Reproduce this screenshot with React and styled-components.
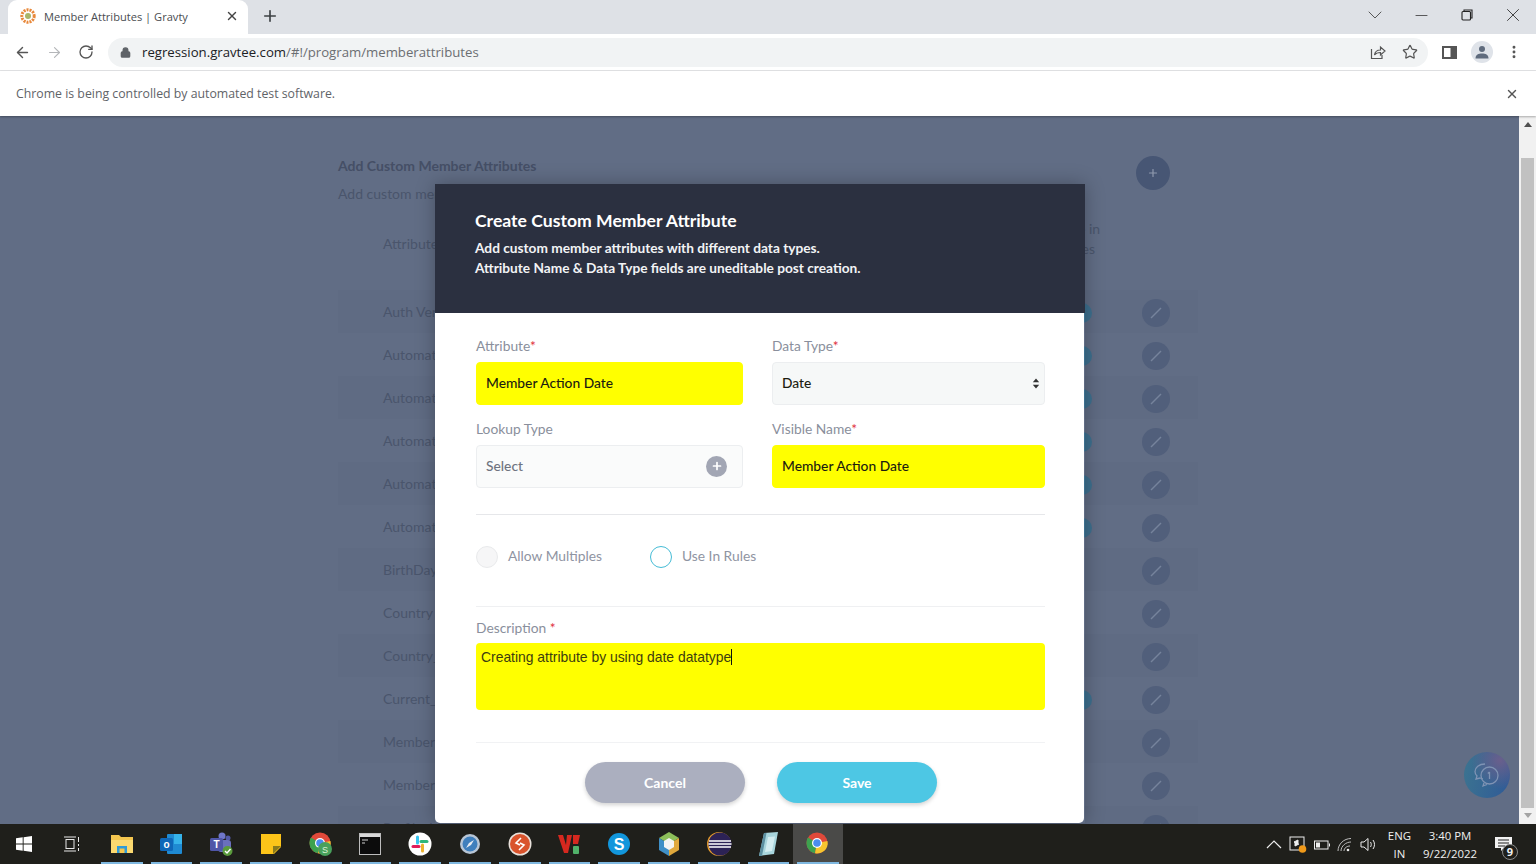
import React from 'react';
import styled, { createGlobalStyle } from 'styled-components';
import { ArrowLeft, ArrowRight, RotateCw, Lock, Star, Plus, X, ChevronDown, Minus, MoreVertical } from 'lucide-react';

const rows = [
  { name: 'Auth Verified', toggle: true },
  { name: 'Automation_1', toggle: true },
  { name: 'Automation_2', toggle: true },
  { name: 'Automation_3', toggle: true },
  { name: 'Automation_4', toggle: true },
  { name: 'Automation_5', toggle: true },
  { name: 'BirthDay', toggle: false },
  { name: 'Country', toggle: false },
  { name: 'Country_Code', toggle: false },
  { name: 'Current_Tier', toggle: true },
  { name: 'Member_Since', toggle: false },
  { name: 'Member_Type', toggle: false },
  { name: 'Profile_Id', toggle: false },
];

const App = () => {
  return (
    <>
      <GlobalStyle />
      <StWindow>
        <StTabStrip>
          <StTab>
            <GravtyLogo />
            <StTabTitle>Member Attributes | Gravty</StTabTitle>
            <X size={14} strokeWidth={2.4} color="#444" />
          </StTab>
          <StNewTab>
            <Plus size={18} strokeWidth={2.2} color="#3c4043" />
          </StNewTab>
          <StWindowControls>
            <StWinButton>
              <ChevronDown size={24} strokeWidth={0.8} color="#333" />
            </StWinButton>
            <StWinButton>
              <Minus size={19} strokeWidth={0.9} color="#222" />
            </StWinButton>
            <StWinButton>
              <RestoreIcon />
            </StWinButton>
            <StWinButton>
              <X size={22} strokeWidth={0.9} color="#222" />
            </StWinButton>
          </StWindowControls>
        </StTabStrip>

        <StToolbar>
          <StNavButtons>
            <ArrowLeft size={17} strokeWidth={2} color="#555" />
            <ArrowRight size={17} strokeWidth={1.6} color="#b4b6b9" />
            <RotateCw size={16} strokeWidth={2} color="#555" />
          </StNavButtons>
          <StOmnibox>
            <Lock size={11} strokeWidth={3} color="#5f6368" fill="#5f6368" />
            <StUrl>
              regression.gravtee.com<StUrlPath>/#!/program/memberattributes</StUrlPath>
            </StUrl>
            <StOmniIcons>
              <ShareIcon />
              <Star size={16} strokeWidth={1.8} color="#555" />
            </StOmniIcons>
          </StOmnibox>
          <StToolbarEnd>
            <PanelIcon />
            <StAvatar>
              <AvatarIcon />
            </StAvatar>
            <MoreVertical size={16} strokeWidth={2.4} color="#555" />
          </StToolbarEnd>
        </StToolbar>

        <StInfoBar>
          <span>Chrome is being controlled by automated test software.</span>
          <X size={14} strokeWidth={2.4} color="#555" />
        </StInfoBar>

        <StViewport>
          <StPage>
            <StBackdropContent>
              <StSectionHead>
                <div>
                  <StSectionTitle>Add Custom Member Attributes</StSectionTitle>
                  <StSectionSub>Add custom member attributes</StSectionSub>
                </div>
                <StAddButton>
                  <Plus size={12} strokeWidth={2.4} color="#8f99ae" />
                </StAddButton>
              </StSectionHead>
              <StTableHead>
                <span>Attribute</span>
                <StHeadRight>
                  Use in
                  <br />
                  Rules
                </StHeadRight>
              </StTableHead>
              <StRows>
                {rows.map((row, i) => (
                  <StRow key={row.name} $striped={i % 2 === 0}>
                    <span>{row.name}</span>
                    <StRowEnd>
                      <StToggle $on={row.toggle} />
                      <StEditButton>
                        <svg width="14" height="14" viewBox="0 0 14 14">
                          <path d="M2 12 L12 2" stroke="#76839c" strokeWidth="1.5" />
                        </svg>
                      </StEditButton>
                    </StRowEnd>
                  </StRow>
                ))}
              </StRows>
            </StBackdropContent>

            <StChatBubble>
              <ChatIcon />
            </StChatBubble>

            <StModal>
              <StModalHeader>
                <StModalTitle>Create Custom Member Attribute</StModalTitle>
                <StModalText>Add custom member attributes with different data types.</StModalText>
                <StModalText>Attribute Name &amp; Data Type fields are uneditable post creation.</StModalText>
              </StModalHeader>
              <StModalBody>
                <StFieldGrid>
                  <StField>
                    <StLabel>
                      Attribute<StRequired>*</StRequired>
                    </StLabel>
                    <StInput $filled>Member Action Date</StInput>
                  </StField>
                  <StField>
                    <StLabel>
                      Data Type<StRequired>*</StRequired>
                    </StLabel>
                    <StInput>
                      Date
                      <StSelectCaret>
                        <svg width="8" height="11" viewBox="0 0 8 11">
                          <path d="M4 0.5 L7.2 4.2 H0.8 Z M4 10.5 L7.2 6.8 H0.8 Z" fill="#333" />
                        </svg>
                      </StSelectCaret>
                    </StInput>
                  </StField>
                  <StField>
                    <StLabel>Lookup Type</StLabel>
                    <StInput $muted>
                      Select
                      <StRoundPlus>
                        <Plus size={12} strokeWidth={3.4} color="#fff" />
                      </StRoundPlus>
                    </StInput>
                  </StField>
                  <StField>
                    <StLabel>
                      Visible Name<StRequired>*</StRequired>
                    </StLabel>
                    <StInput $filled>Member Action Date</StInput>
                  </StField>
                </StFieldGrid>

                <StChecks>
                  <StCheck>
                    <StRadio $disabled />
                    <StCheckLabel>Allow Multiples</StCheckLabel>
                  </StCheck>
                  <StCheck>
                    <StRadio />
                    <StCheckLabel>Use In Rules</StCheckLabel>
                  </StCheck>
                </StChecks>

                <StDescription>
                  <StDescriptionLabel>
                    Description <StRequired>*</StRequired>
                  </StDescriptionLabel>
                  <StTextArea>
                    Creating attribute by using date datatype
                    <StCaret />
                  </StTextArea>
                </StDescription>

                <StActions>
                  <StActionButton $tone="#abafbf">Cancel</StActionButton>
                  <StActionButton $tone="#4dc7e4">Save</StActionButton>
                </StActions>
              </StModalBody>
            </StModal>
          </StPage>

          <StScrollbar>
            <StScrollArrow />
            <StScrollThumb />
            <StScrollArrow $down />
          </StScrollbar>
        </StViewport>

        <StTaskbar>
          <StStartButton>
            <WindowsIcon />
          </StStartButton>
          <StTaskSlot>
            <TaskViewIcon />
          </StTaskSlot>
          <StTaskSlot $running>
            <FolderIcon />
          </StTaskSlot>
          <StTaskSlot $running>
            <OutlookIcon />
          </StTaskSlot>
          <StTaskSlot $running>
            <TeamsIcon />
          </StTaskSlot>
          <StTaskSlot $running>
            <NotesIcon />
          </StTaskSlot>
          <StTaskSlot $running>
            <ChromeIcon badge />
          </StTaskSlot>
          <StTaskSlot $running>
            <ConsoleIcon />
          </StTaskSlot>
          <StTaskSlot $running>
            <SlackIcon />
          </StTaskSlot>
          <StTaskSlot $running>
            <SafariIcon />
          </StTaskSlot>
          <StTaskSlot $running>
            <RemoteIcon />
          </StTaskSlot>
          <StTaskSlot $running>
            <VmIcon />
          </StTaskSlot>
          <StTaskSlot $running>
            <SkypeIcon />
          </StTaskSlot>
          <StTaskSlot $running>
            <CubeIcon />
          </StTaskSlot>
          <StTaskSlot $running>
            <EclipseIcon />
          </StTaskSlot>
          <StTaskSlot $running>
            <BookIcon />
          </StTaskSlot>
          <StTaskSlot $running $active>
            <ChromeIcon />
          </StTaskSlot>

          <StTray>
            <TrayIcons />
            <StTrayLang>
              <span>ENG</span>
              <span>IN</span>
            </StTrayLang>
            <StTrayClock>
              <span>3:40 PM</span>
              <span>9/22/2022</span>
            </StTrayClock>
            <NotificationIcon />
          </StTray>
        </StTaskbar>
      </StWindow>
    </>
  );
};

export default App;

const GravtyLogo = () => (
  <svg width="16" height="16" viewBox="0 0 16 16">
    <circle cx="8" cy="8" r="6.2" fill="none" stroke="#e8883a" strokeWidth="3" strokeDasharray="2 1" />
    <circle cx="8" cy="8" r="3" fill="#a9b56a" />
  </svg>
);

const RestoreIcon = () => (
  <svg width="12" height="12" viewBox="0 0 12 12" fill="none" stroke="#222" strokeWidth="1.1">
    <rect x="1" y="2.5" width="8.5" height="8.5" rx="1" />
    <path d="M3 2.5 V1 H11 V9 H9.5" />
  </svg>
);

const ShareIcon = () => (
  <svg width="16" height="16" viewBox="0 0 16 16" fill="none" stroke="#555" strokeWidth="1.2">
    <path d="M1.5 5 V14.5 H12 V11" />
    <path d="M4.5 11 C5 7.5 8 6 10.5 6 V3 L15 7 L10.5 11 V8.5 C8 8.5 6 9 4.5 11 Z" />
  </svg>
);

const PanelIcon = () => (
  <svg width="15" height="13" viewBox="0 0 15 13">
    <rect x="0" y="0" width="15" height="13" fill="#555" />
    <rect x="2" y="2" width="6.5" height="9" fill="#fff" />
  </svg>
);

const AvatarIcon = () => (
  <svg width="14" height="14" viewBox="0 0 14 14" fill="#5f6b7d">
    <circle cx="7" cy="4" r="3" />
    <path d="M0.5 13.5 C0.5 9.5 3.5 8.5 7 8.5 C10.5 8.5 13.5 9.5 13.5 13.5 Z" />
  </svg>
);

const ChatIcon = () => (
  <svg width="30" height="26" viewBox="0 0 30 26" fill="none" stroke="#7f93b4" strokeWidth="1.3">
    <path d="M13 2 C7 2 3 5.5 3 9.5 C3 11.5 4 13 5 14 L4 17 L8 16 C9 16.5 10 16.7 11 16.8" />
    <circle cx="17.5" cy="13.5" r="8.5" />
    <path d="M17.5 10 V17 M15.8 11.5 L17.5 10" />
    <path d="M12 21 L11 24 L15 22.5" />
  </svg>
);

const WindowsIcon = () => (
  <svg width="16" height="16" viewBox="0 0 16 16" fill="#fff">
    <path d="M0 2.3 L6.7 1.3 V7.6 H0 Z M7.6 1.2 L16 0 V7.6 H7.6 Z M0 8.4 H6.7 V14.7 L0 13.7 Z M7.6 8.4 H16 V16 L7.6 14.8 Z" />
  </svg>
);

const TaskViewIcon = () => (
  <svg width="17" height="16" viewBox="0 0 17 16" fill="none" stroke="#e8e8e8" strokeWidth="1">
    <rect x="3" y="3.5" width="8" height="9" />
    <path d="M1 1 H13 M1 15 H13 M15.5 1 V6 M15.5 8 V10 M15.5 12 V15" />
  </svg>
);

const FolderIcon = () => (
  <svg width="24" height="22" viewBox="0 0 24 22">
    <path d="M1 2 H9 L11 4 H23 V20 H1 Z" fill="#f4c64f" />
    <rect x="1" y="7" width="22" height="13" fill="#fbd970" />
    <rect x="7" y="13" width="10" height="7" fill="#2f9bd8" />
    <rect x="9.5" y="15.5" width="5" height="4.5" fill="#f4c64f" />
  </svg>
);

const OutlookIcon = () => (
  <svg width="24" height="24" viewBox="0 0 24 24">
    <rect x="8" y="2" width="15" height="20" rx="1" fill="#1f8ad2" />
    <rect x="15" y="2" width="8" height="10" fill="#36b3ea" />
    <rect x="1" y="6" width="13" height="13" rx="1.5" fill="#0f67b8" />
    <text x="7.5" y="16" textAnchor="middle" fontSize="10" fontFamily="Liberation Sans, sans-serif" fontWeight="700" fill="#fff">
      o
    </text>
  </svg>
);

const TeamsIcon = () => (
  <svg width="26" height="26" viewBox="0 0 26 26">
    <circle cx="14" cy="5" r="3.5" fill="#6f76c9" />
    <circle cx="20" cy="7" r="2.5" fill="#525aa8" />
    <rect x="10" y="9" width="13" height="12" rx="3" fill="#6a70bd" />
    <rect x="2" y="7" width="13" height="13" rx="1.5" fill="#4f56a8" />
    <text x="8.5" y="17" textAnchor="middle" fontSize="10" fontFamily="Liberation Sans, sans-serif" fontWeight="700" fill="#fff">
      T
    </text>
    <circle cx="19.5" cy="20" r="5" fill="#5a9b3c" />
    <path d="M17 20 L19 22 L22.5 18" fill="none" stroke="#fff" strokeWidth="1.4" />
  </svg>
);

const NotesIcon = () => (
  <svg width="22" height="22" viewBox="0 0 22 22">
    <path d="M1 1 H21 V14 L14 21 H1 Z" fill="#fcc419" />
    <path d="M21 13 L13 21 V13 Z" fill="#8a7a1c" />
  </svg>
);

const ChromeIcon = ({ badge }) => (
  <svg width="26" height="26" viewBox="0 0 26 26">
    <circle cx="12" cy="12" r="10.5" fill="#e0493a" />
    <path d="M12 12 L3 6.5 A10.5 10.5 0 0 0 10 22.3 Z" fill="#3da24f" />
    <path d="M12 12 L22.5 10 A10.5 10.5 0 0 1 10 22.3 Z" fill="#f6c52f" />
    <circle cx="12" cy="12" r="5" fill="#fff" />
    <circle cx="12" cy="12" r="3.8" fill="#4b8df0" />
    {badge && (
      <>
        <circle cx="17" cy="18" r="7" fill="#48a05c" />
        <text x="17" y="21.5" textAnchor="middle" fontSize="9" fontFamily="Liberation Sans, sans-serif" fill="#dff3d9">
          S
        </text>
      </>
    )}
  </svg>
);

const ConsoleIcon = () => (
  <svg width="22" height="22" viewBox="0 0 22 22">
    <rect x="0.5" y="0.5" width="21" height="21" fill="#0c0c0c" stroke="#bdbdbd" />
    <rect x="1" y="1" width="20" height="3" fill="#d9d9d9" />
    <path d="M3 7 H9 M3 10 H6" stroke="#ccc" strokeWidth="1" />
  </svg>
);

const SlackIcon = () => (
  <svg width="24" height="24" viewBox="0 0 24 24">
    <circle cx="12" cy="12" r="11.5" fill="#fff" />
    <g strokeWidth="3" strokeLinecap="round">
      <path d="M9.5 5 V11" stroke="#36c5f0" />
      <path d="M5 14.5 H11" stroke="#e01e5a" />
      <path d="M14.5 19 V13" stroke="#ecb22e" />
      <path d="M19 9.5 H13" stroke="#2eb67d" />
    </g>
  </svg>
);

const SafariIcon = () => (
  <svg width="22" height="22" viewBox="0 0 22 22">
    <circle cx="11" cy="11" r="10" fill="#b8c6d6" />
    <circle cx="11" cy="11" r="7.5" fill="#3f7fbd" />
    <path d="M15 7 L12 12 L7 15 L10 10 Z" fill="#e8ecf2" />
  </svg>
);

const RemoteIcon = () => (
  <svg width="24" height="24" viewBox="0 0 24 24">
    <circle cx="12" cy="12" r="11.5" fill="#e8e1db" />
    <circle cx="12" cy="12" r="10" fill="#d9532c" />
    <path d="M13 6 L8 11 L12 13 M11 18 L16 13 L12 11" fill="none" stroke="#fff" strokeWidth="1.6" />
  </svg>
);

const VmIcon = () => (
  <svg width="24" height="24" viewBox="0 0 24 24">
    <path d="M1 3 H6 L9 13 L10 3 H15 L11 21 H7 Z" fill="#d5281f" />
    <path d="M16 3 H23 L21 12 H16 Z" fill="#d5281f" />
    <rect x="16" y="14" width="6" height="8" rx="1" fill="#51b26a" />
  </svg>
);

const SkypeIcon = () => (
  <svg width="24" height="24" viewBox="0 0 24 24">
    <circle cx="12" cy="12" r="11" fill="#1296dc" />
    <text x="12" y="17.5" textAnchor="middle" fontSize="16" fontFamily="Liberation Sans, sans-serif" fontWeight="700" fill="#fff">
      S
    </text>
  </svg>
);

const CubeIcon = () => (
  <svg width="22" height="26" viewBox="0 0 22 26">
    <path d="M11 1 L21 7 L11 13 L1 7 Z" fill="#8dbf5a" />
    <path d="M1 7 L11 13 V25 L1 19 Z" fill="#3f8fc7" />
    <path d="M21 7 L11 13 V25 L21 19 Z" fill="#e0a83c" />
    <path d="M11 7 L16 10 V16 L11 19 L6 16 V10 Z" fill="#f4f4f4" />
  </svg>
);

const EclipseIcon = () => (
  <svg width="26" height="26" viewBox="0 0 26 26">
    <circle cx="13" cy="13" r="12" fill="#e39a2e" />
    <circle cx="14" cy="13" r="11.5" fill="#2c2255" />
    <path d="M3 10 H25 M2.5 13 H25.5 M3 16 H25" stroke="#fff" strokeWidth="1.5" />
  </svg>
);

const BookIcon = () => (
  <svg width="22" height="26" viewBox="0 0 22 26">
    <path d="M7 2 L21 1 L17 23 L2 25 Z" fill="#a8d5dc" />
    <path d="M7 2 L2 25 L5 25 L9.5 2 Z" fill="#5c8fa0" />
    <path d="M11 6 L18 5.5 L15 20 L8 21 Z" fill="#d4edf0" />
  </svg>
);

const TrayIcons = () => (
  <StTrayIcons>
    <svg width="16" height="9" viewBox="0 0 16 9" fill="none" stroke="#eee" strokeWidth="1.2">
      <path d="M1 8 L8 1 L15 8" />
    </svg>
    <svg width="18" height="18" viewBox="0 0 18 18" fill="none" stroke="#eee" strokeWidth="1">
      <rect x="1" y="1" width="14" height="13" />
      <path d="M5 6 L9 4 V8 Z M10 8 L6 10 V6" fill="#eee" />
      <circle cx="13.5" cy="13" r="3.8" fill="#f09a1a" stroke="none" />
    </svg>
    <svg width="16" height="10" viewBox="0 0 16 10" fill="none" stroke="#eee" strokeWidth="1">
      <rect x="0.5" y="1" width="13.5" height="8" />
      <rect x="2" y="2.5" width="4" height="5" fill="#eee" stroke="none" />
      <path d="M15.5 3.5 V6.5" />
    </svg>
    <svg width="16" height="15" viewBox="0 0 16 15" fill="none" stroke="#bdbdbd" strokeWidth="1">
      <path d="M1 14 C1 7 7 1.5 14 1.5 M4 14 C4 9 9 5 14 5 M7 14 C7 11 10 9 13 9" />
      <circle cx="11" cy="13" r="1.3" fill="#eee" stroke="none" />
    </svg>
    <svg width="17" height="15" viewBox="0 0 17 15" fill="none" stroke="#eee" strokeWidth="1">
      <path d="M1 5 H4 L8 1.5 V13.5 L4 10 H1 Z" />
      <path d="M10.5 5 C11.5 6.5 11.5 8.5 10.5 10 M13 3 C15 5.5 15 9.5 13 12" />
    </svg>
  </StTrayIcons>
);

const NotificationIcon = () => (
  <StNotification>
    <svg width="17" height="14" viewBox="0 0 17 14">
      <path d="M0 0 H17 V11 H9 L6 14 V11 H0 Z" fill="#f2f2f2" />
      <path d="M3 3 H14 M3 6 H14 M3 9 H10" stroke="#202020" strokeWidth="1" />
    </svg>
    <StNotificationCount>9</StNotificationCount>
  </StNotification>
);

const GlobalStyle = createGlobalStyle`
  html, body {
    margin: 0;
    padding: 0;
    height: 100%;
    overflow: hidden;
    background: #616d85;
  }
  #root {
    height: 100%;
  }
  * {
    box-sizing: border-box;
  }
`;

const StWindow = styled.div`
  width: 1536px;
  height: 864px;
  display: flex;
  flex-direction: column;
  font-family: 'Open Sans', 'Liberation Sans', sans-serif;
`;

const StTabStrip = styled.div`
  height: 34px;
  display: flex;
  align-items: flex-end;
  padding-left: 8px;
  background: #dee1e6;
`;

const StTab = styled.div`
  width: 240px;
  height: 34px;
  padding: 0 9px 2px 12px;
  display: flex;
  align-items: center;
  background: #fff;
  border-radius: 9px 9px 0 0;
`;

const StTabTitle = styled.span`
  flex: 1;
  margin-left: 8px;
  font-size: 11.1px;
  color: #4a4d51;
  white-space: nowrap;
`;

const StNewTab = styled.div`
  width: 30px;
  height: 34px;
  margin-left: 7px;
  padding-bottom: 2px;
  display: flex;
  align-items: center;
  justify-content: center;
`;

const StWindowControls = styled.div`
  margin-left: auto;
  height: 34px;
  padding-bottom: 4px;
  display: flex;
  align-items: center;
`;

const StWinButton = styled.div`
  width: 46px;
  display: flex;
  justify-content: center;
`;

const StToolbar = styled.div`
  height: 37px;
  display: flex;
  align-items: center;
  background: #fff;
  border-bottom: 1px solid #e3e4e6;
`;

const StNavButtons = styled.div`
  width: 108px;
  padding: 0 14px 0 14px;
  display: flex;
  align-items: center;
  justify-content: space-between;
`;

const StOmnibox = styled.div`
  width: 1320px;
  height: 29px;
  padding: 0 10px 0 12px;
  display: flex;
  align-items: center;
  background: #f1f3f4;
  border-radius: 15px;
`;

const StUrl = styled.span`
  flex: 1;
  margin-left: 11px;
  font-size: 13.2px;
  color: #202124;
`;

const StUrlPath = styled.span`
  color: #6b6e72;
`;

const StOmniIcons = styled.div`
  width: 48px;
  display: flex;
  align-items: center;
  justify-content: space-between;
`;

const StToolbarEnd = styled.div`
  flex: 1;
  padding: 0 14px 0 14px;
  display: flex;
  align-items: center;
  justify-content: space-between;
`;

const StAvatar = styled.div`
  width: 22px;
  height: 22px;
  display: flex;
  align-items: center;
  justify-content: center;
  background: #dfe3e9;
  border-radius: 50%;
`;

const StInfoBar = styled.div`
  height: 45px;
  padding: 0 17px 0 16px;
  display: flex;
  align-items: center;
  justify-content: space-between;
  font-size: 12.3px;
  color: #5f6368;
  background: #fff;
  box-shadow: 0 1px 2px rgba(0, 0, 0, 0.3);
  position: relative;
  z-index: 1;
`;

const StViewport = styled.div`
  flex: 1;
  min-height: 0;
  display: flex;
`;

const StPage = styled.div`
  flex: 1;
  position: relative;
  overflow: hidden;
  background: #616d85;
`;

const StBackdropContent = styled.div`
  width: 860px;
  margin-left: 338px;
  padding-top: 41px;
  font-family: Lato, 'Open Sans', sans-serif;
  font-size: 14px;
  color: #4a556c;
`;

const StSectionHead = styled.div`
  display: flex;
  justify-content: space-between;
  padding-right: 28px;
`;

const StSectionTitle = styled.div`
  font-size: 14px;
  font-weight: 700;
  line-height: 18px;
  color: #454f66;
`;

const StSectionSub = styled.div`
  margin-top: 10px;
  line-height: 18px;
`;

const StAddButton = styled.div`
  width: 34px;
  height: 34px;
  margin-top: -1px;
  display: flex;
  align-items: center;
  justify-content: center;
  background: #475674;
  border-radius: 50%;
`;

const StTableHead = styled.div`
  height: 87px;
  padding: 31px 98px 0 45px;
  display: flex;
  justify-content: space-between;
  align-items: flex-start;
  line-height: 20px;
`;

const StHeadRight = styled.span`
  line-height: 20px;
  margin-top: -15px;
  width: 38px;
  white-space: nowrap;
`;

const StRows = styled.div`
  display: flex;
  flex-direction: column;
`;

const StRow = styled.div`
  height: 43px;
  flex: none;
  padding: 0 28px 0 45px;
  display: flex;
  align-items: center;
  justify-content: space-between;
  background: ${props => (props.$striped ? '#5f6b83' : 'transparent')};
`;

const StRowEnd = styled.div`
  display: flex;
  align-items: center;
  gap: 50px;
  padding-top: 2px;
`;

const StToggle = styled.div`
  width: 20px;
  height: 20px;
  background: ${props => (props.$on ? '#3d6f8e' : 'transparent')};
  border-radius: 50%;
`;

const StEditButton = styled.div`
  width: 28px;
  height: 28px;
  display: flex;
  align-items: center;
  justify-content: center;
  background: #515f7b;
  border-radius: 50%;
`;

const StChatBubble = styled.div`
  position: absolute;
  left: 1464px;
  top: 636px;
  width: 46px;
  height: 46px;
  display: flex;
  align-items: center;
  justify-content: center;
  background: radial-gradient(circle at 78% 18%, #6a5f8c, transparent 55%), linear-gradient(100deg, #3c7490, #2f5a97);
  border-radius: 50%;
`;

const StModal = styled.div`
  position: absolute;
  left: 435px;
  top: 68px;
  width: 650px;
  height: 639px;
  display: flex;
  flex-direction: column;
  font-family: Lato, 'Open Sans', sans-serif;
  box-shadow: 0 0 18px rgba(0, 0, 0, 0.28);
`;

const StModalHeader = styled.div`
  height: 129px;
  padding: 24px 40px 0;
  background: #2b3040;
  color: #f2f3f5;
`;

const StModalTitle = styled.h2`
  margin: 0 0 4px;
  font-size: 17.6px;
  line-height: 26px;
  font-weight: 700;
  color: #fff;
`;

const StModalText = styled.p`
  margin: 0;
  font-size: 13.7px;
  line-height: 20px;
  font-weight: 700;
`;

const StModalBody = styled.div`
  flex: 1;
  margin-right: 1px;
  padding: 24px 39px 0 41px;
  background: #fff;
  border-radius: 0 0 5px 5px;
`;

const StFieldGrid = styled.div`
  display: grid;
  grid-template-columns: 267px 273px;
  column-gap: 29px;
  row-gap: 15px;
  padding-bottom: 26px;
  border-bottom: 1px solid #e6e7ea;
`;

const StField = styled.div`
  display: flex;
  flex-direction: column;
`;

const StLabel = styled.label`
  display: block;
  height: 25px;
  font-size: 13.8px;
  line-height: 18px;
  color: #8a8f9c;
`;

const StDescriptionLabel = styled(StLabel)`
  height: 24px;
`;

const StRequired = styled.span`
  color: #e0303c;
`;

const StInput = styled.div`
  height: 43px;
  padding: 0 9px 3px;
  display: flex;
  align-items: center;
  justify-content: space-between;
  font-size: 13.8px;
  font-weight: 500;
  color: ${props => (props.$muted ? '#6f7480' : '#1c1c10')};
  background: ${props => (props.$filled ? '#ffff00' : props.$muted ? '#fafbfb' : '#f6f8f8')};
  border: 1px solid ${props => (props.$filled ? '#ffff00' : '#eceef0')};
  border-radius: 4px;
`;

const StSelectCaret = styled.span`
  display: flex;
  margin-right: -5px;
  margin-bottom: -2px;
`;

const StRoundPlus = styled.span`
  width: 21px;
  height: 21px;
  margin-right: 6px;
  margin-bottom: -2px;
  display: flex;
  align-items: center;
  justify-content: center;
  background: #a2a6b4;
  border-radius: 50%;
`;

const StChecks = styled.div`
  height: 92px;
  padding-bottom: 9px;
  display: flex;
  align-items: center;
  gap: 48px;
  border-bottom: 1px solid #eff0f2;
`;

const StCheck = styled.div`
  display: flex;
  align-items: center;
  gap: 10px;
`;

const StRadio = styled.span`
  width: 22px;
  height: 22px;
  background: ${props => (props.$disabled ? '#f6f6f7' : '#fff')};
  border: 1px solid ${props => (props.$disabled ? '#e9eaec' : '#45bcd6')};
  border-radius: 50%;
  margin-top: 1px;
`;

const StCheckLabel = styled.span`
  font-size: 13.8px;
  margin-bottom: 2px;
  color: #8f94a2;
`;

const StDescription = styled.div`
  padding-top: 12px;
  padding-bottom: 32px;
  border-bottom: 1px solid #f1f2f4;
`;

const StTextArea = styled.div`
  height: 67px;
  padding: 5px 5px;
  display: flex;
  align-items: flex-start;
  font-family: 'Liberation Sans', Arial, sans-serif;
  font-size: 13.9px;
  line-height: 18px;
  color: #3d3d10;
  background: #ffff00;
  border-radius: 4px;
`;

const StCaret = styled.span`
  width: 1px;
  height: 16px;
  margin-top: 1px;
  background: #111;
`;

const StActions = styled.div`
  padding: 19px 108px 0 109px;
  display: flex;
  justify-content: space-between;
`;

const StActionButton = styled.button`
  width: 160px;
  height: 41px;
  border: 0;
  border-radius: 21px;
  font-family: Lato, 'Open Sans', sans-serif;
  font-size: 14px;
  font-weight: 700;
  color: #fff;
  background: ${props => props.$tone};
  box-shadow: 0 2px 4px rgba(0, 0, 0, 0.18);
`;

const StScrollbar = styled.div`
  width: 17px;
  display: flex;
  flex-direction: column;
  align-items: center;
  background: #f1f1f1;
`;

const StScrollArrow = styled.div`
  flex: none;
  width: 0;
  height: 0;
  margin-top: ${props => (props.$down ? '5px' : '6px')};
  border-left: 4px solid transparent;
  border-right: 4px solid transparent;
  border-bottom: ${props => (props.$down ? '0' : '5px solid #505050')};
  border-top: ${props => (props.$down ? '5px solid #a3a3a3' : '0')};
`;

const StScrollThumb = styled.div`
  width: 13px;
  height: 650px;
  margin-top: 31px;
  background: #c1c1c1;
`;

const StTaskbar = styled.div`
  height: 40px;
  display: flex;
  align-items: stretch;
  background: #1f1f1b;
`;

const StStartButton = styled.div`
  width: 47px;
  display: flex;
  align-items: center;
  justify-content: center;
`;

const StTaskSlot = styled.div`
  width: 49.75px;
  position: relative;
  display: flex;
  align-items: center;
  justify-content: center;
  background: ${props => (props.$active ? '#4a4a48' : 'transparent')};

  &::after {
    content: '';
    display: ${props => (props.$running ? 'block' : 'none')};
    position: absolute;
    left: 4px;
    right: 4px;
    bottom: 0;
    height: 2px;
    background: #7fb8e0;
  }
`;

const StTray = styled.div`
  margin-left: auto;
  padding-top: 1px;
  display: flex;
  align-items: center;
  color: #f0f0f0;
  font-size: 11.4px;
`;

const StTrayIcons = styled.div`
  display: flex;
  align-items: center;
  gap: 7px;
`;

const StTrayLang = styled.div`
  margin-left: 11px;
  display: flex;
  flex-direction: column;
  align-items: center;
  line-height: 18px;
`;

const StTrayClock = styled.div`
  margin-left: 12px;
  display: flex;
  flex-direction: column;
  align-items: center;
  line-height: 18px;
`;

const StNotification = styled.div`
  width: 29px;
  height: 30px;
  margin: 0 12px 0 18px;
  padding-top: 7px;
  position: relative;
`;

const StNotificationCount = styled.span`
  position: absolute;
  left: 7px;
  bottom: 0;
  width: 16px;
  height: 16px;
  display: flex;
  align-items: center;
  justify-content: center;
  background: #1f1f1b;
  border: 1px solid #8a8a8a;
  border-radius: 50%;
  font-size: 11px;
  font-weight: 700;
`;
